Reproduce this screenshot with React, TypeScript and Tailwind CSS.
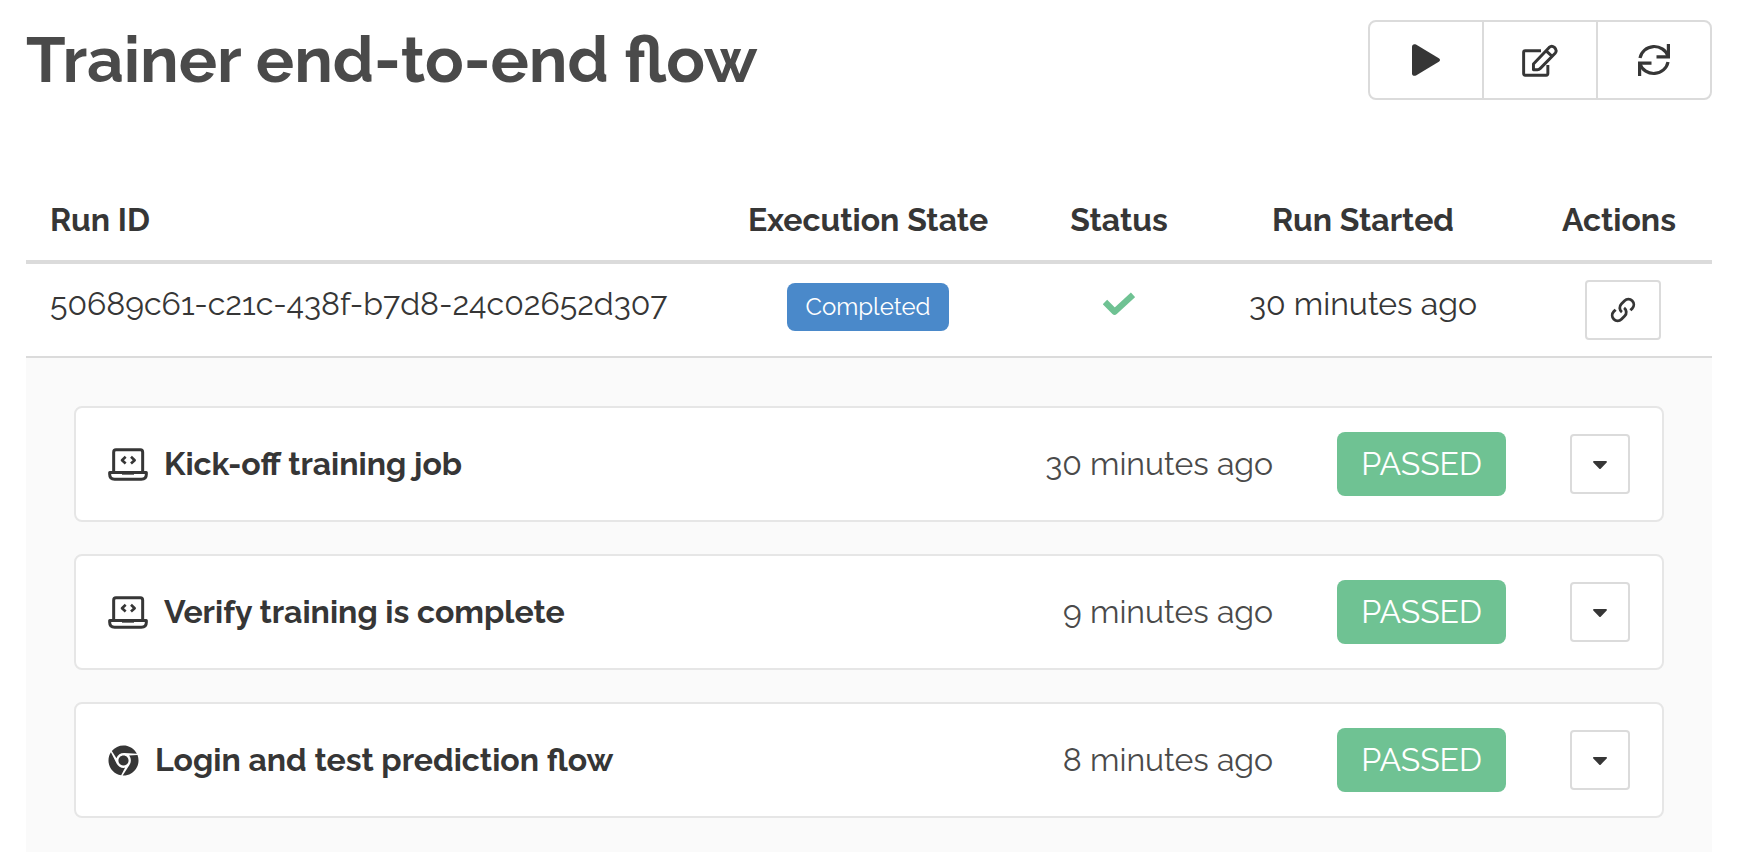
import type { ReactNode } from "react";
import { FaCaretDown, FaChrome } from "react-icons/fa";

type Step = {
  id: number;
  name: string;
  kind: "api" | "browser";
  started: string;
  result: string;
};

const steps: Step[] = [
  { id: 1, name: "Kick-off training job", kind: "api", started: "30 minutes ago", result: "PASSED" },
  { id: 2, name: "Verify training is complete", kind: "api", started: "9 minutes ago", result: "PASSED" },
  { id: 3, name: "Login and test prediction flow", kind: "browser", started: "8 minutes ago", result: "PASSED" },
];

function PlayIcon() {
  return (
    <svg viewBox="0 0 28 32" className="h-8 w-7" fill="currentColor" aria-hidden="true">
      <path d="M0 2.5C0 .5 2-.5 4 .6L26.8 14.2c1.6 1 1.6 2.6 0 3.6L4 31.4C2 32.5 0 31.5 0 29.5Z" />
    </svg>
  );
}

function EditIcon() {
  return (
    <svg viewBox="36 24 110 100" className="h-[33px] w-9" fill="none" stroke="currentColor" strokeWidth="9" strokeLinejoin="round" aria-hidden="true">
      <path d="M94 44H46q-5 0-5 5v65q0 5 5 5h64q5 0 5-5V88" />
      <path d="M71 102V85l48-51q8-7 16 0 9 9 3 17L92 98q-4 4-9 4Z" />
      <path d="M109 44l20 18" />
    </svg>
  );
}

function RefreshIcon() {
  return (
    <svg viewBox="0 0 32 32" className="size-8" fill="none" stroke="currentColor" strokeWidth="3.2" aria-hidden="true">
      <path d="M2 14A14.5 14 0 0 1 30 12" />
      <path d="M30.4 0V12.8H18.5" />
      <path d="M30 18A14.5 14 0 0 1 2 20" />
      <path d="M1.6 32V19.2H13.5" />
    </svg>
  );
}

function LinkIcon() {
  return (
    <svg viewBox="0 0 24 24" className="size-[26px]" fill="none" stroke="currentColor" strokeWidth="2.6" aria-hidden="true">
      <g transform="matrix(0 -1 -1 0 24 24)">
        <path d="M10 13a5 5 0 0 0 7.54.54l3-3a5 5 0 0 0-7.07-7.07l-1.72 1.71" />
        <path d="M14 11a5 5 0 0 0-7.54-.54l-3 3a5 5 0 0 0 7.07 7.07l1.71-1.71" />
      </g>
    </svg>
  );
}

function LaptopCodeIcon() {
  return (
    <svg viewBox="24 24 120 98" className="h-[33px] w-10" fill="none" stroke="currentColor" strokeWidth="9" strokeLinejoin="round" aria-hidden="true">
      <path d="M41 95V36q0-7 7-7h73q7 0 7 7v59" />
      <path d="M29 97h110v5q0 15-15 15H44q-15 0-15-15Z" />
      <path d="M66 99h36" />
      <path d="M77 50L66 60l11 10M93 50l11 10-11 10" strokeWidth="8" />
    </svg>
  );
}

function CheckIcon() {
  return (
    <svg viewBox="0 0 33 24" className="h-6 w-8" fill="none" stroke="currentColor" strokeWidth="6.5" strokeLinejoin="round" role="img" aria-label="Passed">
      <path d="M2 10L12 20 31 2.5" />
    </svg>
  );
}

function ToolbarButton({ label, children }: { label: string; children: ReactNode }) {
  return (
    <button
      type="button"
      aria-label={label}
      className="-ml-[2px] flex h-20 w-[116px] items-center justify-center border-2 border-[#dbdbdb] bg-white first:ml-0 first:rounded-l-lg last:rounded-r-lg"
    >
      {children}
    </button>
  );
}

function StepCard({ step }: { step: Step }) {
  return (
    <li className="flex items-center rounded-lg border-2 border-[#e6e6e6] bg-white px-8 py-6">
      <h2 className="flex flex-1 items-center gap-4 font-bold">
        {step.kind === "browser" ? <FaChrome className="size-[31px]" aria-hidden="true" /> : <LaptopCodeIcon />}
        {step.name}
      </h2>
      <span className="text-[#4a4a4a]">{step.started}</span>
      <span className="ml-16 rounded-lg bg-[#6fc293] px-6 py-2 text-white">{step.result}</span>
      <button
        type="button"
        aria-label={`Show details of ${step.name}`}
        className="ml-16 flex size-[60px] items-center justify-center rounded-sm border-2 border-[#dbdbdb] bg-white"
      >
        <FaCaretDown className="size-6" />
      </button>
    </li>
  );
}

export default function App() {
  return (
    <main className="min-h-screen bg-white px-[26px] pt-5 font-['Raleway','Open_Sans',sans-serif] text-[32px] leading-[48px] text-[#363636]">
      <header className="flex items-center justify-between pr-[10px]">
        <h1 className="text-[64px] leading-[80px] font-bold text-[#4a4a4a]">Trainer end-to-end flow</h1>
        <div className="flex">
          <ToolbarButton label="Run"><PlayIcon /></ToolbarButton>
          <ToolbarButton label="Edit"><EditIcon /></ToolbarButton>
          <ToolbarButton label="Refresh"><RefreshIcon /></ToolbarButton>
        </div>
      </header>

      <div className="mt-20 pr-[10px]">
        <table className="w-full table-fixed border-separate border-spacing-0">
          <thead>
            <tr className="h-[84px] font-bold">
              <th className="border-b-4 border-[#dbdbdb] px-6 text-left">Run ID</th>
              <th className="w-[340px] border-b-4 border-[#dbdbdb]">Execution State</th>
              <th className="w-[162px] border-b-4 border-[#dbdbdb]">Status</th>
              <th className="w-[326px] border-b-4 border-[#dbdbdb]">Run Started</th>
              <th className="w-[186px] border-b-4 border-[#dbdbdb]">Actions</th>
            </tr>
          </thead>
          <tbody>
            <tr className="text-center align-top">
              <td className="border-b-2 border-[#dbdbdb] py-4 pl-6 text-left">50689c61-c21c-438f-b7d8-24c02652d307</td>
              <td className="border-b-2 border-[#dbdbdb] pt-[19px]">
                <span className="mx-auto block w-[162px] rounded-lg bg-[#4a89ca] text-2xl leading-[48px] text-white">
                  Completed
                </span>
              </td>
              <td className="border-b-2 border-[#dbdbdb] pt-4">
                <span className="flex h-12 items-center justify-center text-[#6fc293]"><CheckIcon /></span>
              </td>
              <td className="border-b-2 border-[#dbdbdb] pt-4">30 minutes ago</td>
              <td className="border-b-2 border-[#dbdbdb] py-4 pl-2">
                <button
                  type="button"
                  aria-label="Copy link to run"
                  className="mx-auto flex h-[60px] w-[76px] items-center justify-center rounded-sm border-2 border-[#dbdbdb] bg-white"
                >
                  <LinkIcon />
                </button>
              </td>
            </tr>

            {/* Steps of the expanded run */}
            <tr>
              <td colSpan={5} className="bg-[#fafafa] px-12 py-12">
                <ul className="flex flex-col gap-8">
                  {steps.map((step) => (
                    <StepCard key={step.id} step={step} />
                  ))}
                </ul>
              </td>
            </tr>
          </tbody>
        </table>
      </div>
    </main>
  );
}
